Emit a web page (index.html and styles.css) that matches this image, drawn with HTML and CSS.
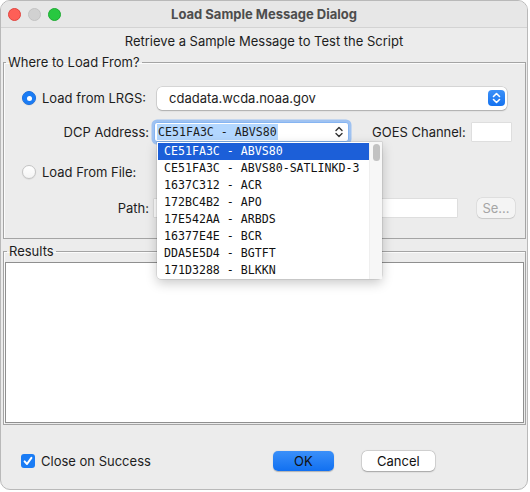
FILE: index.html
```html
<!DOCTYPE html>
<html>
<head>
<meta charset="utf-8">
<link rel="stylesheet" href="styles.css">
</head>
<body>
<div class="window">
  <div class="titlebar">
    <div class="lights">
      <span class="light red"></span>
      <span class="light gray"></span>
      <span class="light green"></span>
    </div>
    <div class="title">Load Sample Message Dialog</div>
  </div>
  <div class="subtitle">Retrieve a Sample Message to Test the Script</div>

  <fieldset class="group where">
    <legend>Where to Load From?</legend>
    <div class="row row1">
      <div class="lead">
        <span class="radio on"></span>
        <span>Load from LRGS:</span>
      </div>
      <div class="combo big">
        <span class="combo-text">cdadata.wcda.noaa.gov</span>
        <span class="stepper blue">
          <svg width="17" height="16" viewBox="0 0 17 16"><path d="M5.5 6.5 L8.5 3.5 L11.5 6.5 M5.5 9.5 L8.5 12.5 L11.5 9.5" fill="none" stroke="#fff" stroke-width="1.6" stroke-linecap="round" stroke-linejoin="round"/></svg>
        </span>
      </div>
    </div>
    <div class="row row2">
      <div class="lead right">DCP Address:</div>
      <div class="combo dcp">
        <span class="combo-text mono"><span class="sel">CE51FA3C - ABVS80</span></span>
        <span class="stepper plain">
          <svg width="12" height="16" viewBox="0 0 12 16"><path d="M3 6.5 L6 3.5 L9 6.5 M3 9.5 L6 12.5 L9 9.5" fill="none" stroke="#333" stroke-width="1.4" stroke-linecap="round" stroke-linejoin="round"/></svg>
        </span>
      </div>
      <span class="goes">GOES Channel:</span>
      <span class="input goes-input"></span>
    </div>
    <div class="row row3">
      <div class="lead">
        <span class="radio"></span>
        <span>Load From File:</span>
      </div>
    </div>
    <div class="row row4">
      <div class="lead right">Path:</div>
      <span class="input path"></span>
      <span class="btn small">Se...</span>
    </div>
  </fieldset>

  <fieldset class="group results">
    <legend>Results</legend>
    <div class="textarea"></div>
  </fieldset>

  <div class="bottom">
    <label class="check">
      <span class="checkbox">
        <svg width="14" height="14" viewBox="0 0 14 14"><path d="M3.6 7.4 L6 10 L10.4 3.8" fill="none" stroke="#fff" stroke-width="2" stroke-linecap="round" stroke-linejoin="round"/></svg>
      </span>
      <span>Close on Success</span>
    </label>
    <div class="buttons">
      <span class="btn ok">OK</span>
      <span class="btn cancel">Cancel</span>
    </div>
  </div>

  <div class="popup">
    <ul class="list mono">
      <li class="active">CE51FA3C - ABVS80</li>
      <li>CE51FA3C - ABVS80-SATLINKD-3</li>
      <li>1637C312 - ACR</li>
      <li>172BC4B2 - APO</li>
      <li>17E542AA - ARBDS</li>
      <li>16377E4E - BCR</li>
      <li>DDA5E5D4 - BGTFT</li>
      <li>171D3288 - BLKKN</li>
    </ul>
    <div class="scroll"><span class="thumb"></span></div>
  </div>
</div>
</body>
</html>
```

FILE: styles.css
```css
* { box-sizing: border-box; }
html, body { margin: 0; padding: 0; background: #ffffff; }
body {
  font-family: Inter, "Open Sans", sans-serif;
  font-size: 13px;
  color: #1d1d1d;
}
.window {
  position: relative;
  width: 528px;
  height: 490px;
  background: #ececec;
  border: 1px solid #b9b9b9;
  border-radius: 10px;
  overflow: hidden;
}
.titlebar {
  position: relative;
  height: 27px;
  background: #e7e7e7;
  border-bottom: 1px solid #d3d3d3;
  display: flex;
  align-items: center;
  justify-content: center;
}
.lights {
  position: absolute;
  left: 7px;
  top: 7px;
  display: flex;
  gap: 7px;
}
.light { width: 13px; height: 13px; border-radius: 50%; display: block; }
.red { background: #fe5f57; border: 0.5px solid #e0443e; }
.gray { background: #d1d1d1; border: 0.5px solid #c2c2c2; }
.green { background: #28c840; border: 0.5px solid #1eaa32; }
.title {
  font-weight: 700;
  color: #4d4d4d;
  font-size: 13px;
}
.subtitle {
  text-align: center;
  height: 26px;
  line-height: 26px;
  margin-top: 0px;
}
.group {
  margin: 0 1px 0 2px;
  border: 1px solid #a4a4a4;
  box-shadow: inset 1px 1px 0 #fbfbfb;
  padding: 0;
  min-width: 0;
}
.group legend {
  padding: 0 2px 0 2px;
  margin-left: 2px;
  line-height: 16px;
  font-size: 13px;
}
.where { padding: 16px 0 21px 0; }
.row { display: flex; align-items: center; }
.lead {
  width: 150px;
  flex: none;
  display: flex;
  align-items: center;
  gap: 6px;
  padding-left: 18px;
}
.lead.right { justify-content: flex-end; padding-right: 5px; }
.row1 { height: 24px; }
.row2 { height: 20px; margin-top: 12px; }
.row3 { height: 18px; margin-top: 21px; }
.row4 { height: 19px; margin-top: 17px; }

.radio {
  width: 14px; height: 14px; border-radius: 50%;
  background: linear-gradient(#ffffff, #f4f4f4);
  border: 1px solid #c4c4c4;
  box-shadow: 0 0.5px 1px rgba(0,0,0,0.12);
  display: inline-block;
  position: relative;
  flex: none;
}
.radio.on { background: #1a7cf5; border-color: #1a70e0; }
.radio.on::after {
  content: "";
  position: absolute;
  left: 3.5px; top: 3.5px;
  width: 5px; height: 5px; border-radius: 50%;
  background: #fff;
}
.combo {
  display: flex;
  align-items: center;
  background: #fff;
  border-radius: 5px;
}
.combo.big {
  margin-left: 3px;
  width: 350px;
  height: 23px;
  box-shadow: 0 0 0 0.5px rgba(0,0,0,0.18), 0 1px 1.5px rgba(0,0,0,0.2);
  padding-left: 12px;
  padding-right: 2px;
}
.combo-text { flex: 1; font-size: 13px; }
.stepper.blue {
  width: 17px; height: 16px;
  background: linear-gradient(#3d91f8, #1472f0);
  border-radius: 4px;
  display: flex;
}
.combo.dcp {
  width: 195px;
  height: 20px;
  border-radius: 3px;
  border: 1px solid #86b5f2;
  box-shadow: 0 0 0 2.5px rgba(96,160,245,0.55);
  padding-left: 2px;
  padding-right: 3px;
}
.mono {
  font-family: "DejaVu Sans Mono", "Liberation Mono", monospace;
  font-size: 11.6px;
}
.combo-text.mono { font-size: 11.6px; }
.sel { background: #b3d7ff; padding: 1px 1px; }
.stepper.plain { display: flex; }
.goes { margin-left: 23px; }
.input { background: #fff; display: block; box-shadow: 0 0 0 0.5px rgba(0,0,0,0.12); }
.goes-input { width: 39px; height: 18px; margin-left: 6px; }
.input.path { width: 303px; height: 18px; margin-left: 0px; }
.btn {
  display: flex; align-items: center; justify-content: center;
  border-radius: 5px;
  font-size: 13px;
}
.btn.small {
  width: 38px; height: 20px;
  margin-left: 20px;
  background: #f4f4f4;
  color: #a5a5a5;
  box-shadow: 0 0 0 0.5px rgba(0,0,0,0.1), 0 0.5px 1px rgba(0,0,0,0.1);
}

.results { margin-top: 4px; padding: 3px 1px 1px 1px; }
.textarea {
  height: 161px;
  background: #fff;
  border: 1px solid #8f8f8f;
}

.bottom {
  display: flex;
  align-items: center;
  height: 20px;
  margin-top: 26px;
  padding-left: 20px;
}
.check { display: flex; align-items: center; gap: 6px; }
.checkbox {
  width: 14px; height: 14px;
  border-radius: 3px;
  background: #1a7cf5;
  display: flex;
}
.buttons { display: flex; gap: 28px; margin-left: 122px; }
.btn.ok {
  width: 61px; height: 20px;
  background: linear-gradient(#3b90f9, #1170f1);
  color: #111;
  box-shadow: 0 0.5px 1px rgba(0,0,0,0.25);
}
.btn.cancel {
  width: 73px; height: 20px;
  background: #fff;
  color: #111;
  box-shadow: 0 0 0 0.5px rgba(0,0,0,0.15), 0 0.5px 1.5px rgba(0,0,0,0.25);
}

.popup {
  position: absolute;
  left: 156px;
  top: 141px;
  width: 225px;
  height: 137px;
  background: #fff;
  border-radius: 0 0 4px 4px;
  box-shadow: 0 0 0 0.5px rgba(0,0,0,0.15), 0 4px 12px rgba(0,0,0,0.22);
  display: flex;
}
.list {
  list-style: none;
  margin: 0;
  padding: 1px 0 0 1px;
  flex: 1;
}
.list li {
  height: 17px;
  line-height: 17px;
  padding-left: 6px;
  color: #111;
  white-space: nowrap;
}
.list li.active { background: #1c5fd8; color: #fff; }
.scroll {
  width: 13px;
  background: #f7f7f7;
  border-left: 1px solid #efefef;
  padding: 2px 3px 0 3px;
}
.thumb {
  display: block;
  width: 7px; height: 17px;
  border-radius: 4px;
  background: #c2c2c2;
}
```
